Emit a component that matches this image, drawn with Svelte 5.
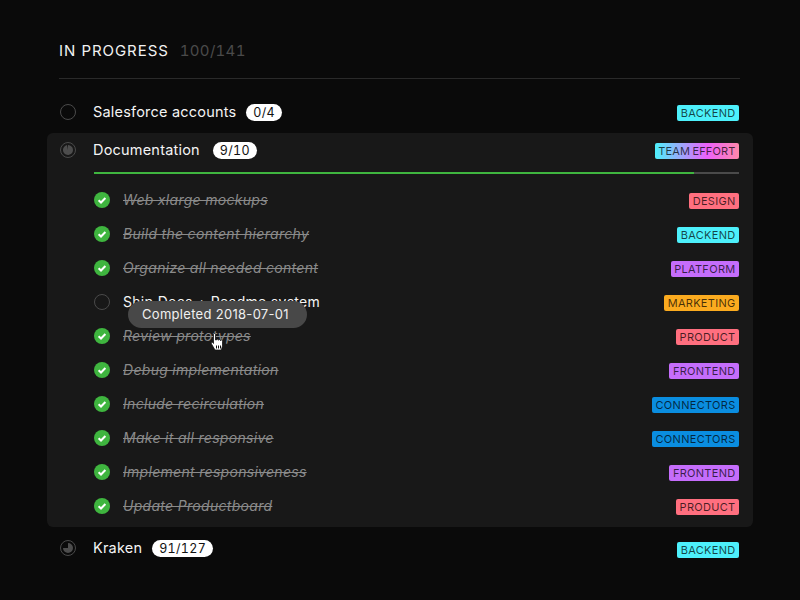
<script>
  const tones = {
    BACKEND: "cyan",
    DESIGN: "red",
    PLATFORM: "violet",
    MARKETING: "orange",
    PRODUCT: "red",
    FRONTEND: "violet",
    CONNECTORS: "blue",
    "TEAM EFFORT": "mix"
  };

  const tasks = [
    { name: "Web xlarge mockups", tag: "DESIGN", done: true },
    { name: "Build the content hierarchy", tag: "BACKEND", done: true },
    { name: "Organize all needed content", tag: "PLATFORM", done: true },
    { name: "Ship Docs + Readme system", tag: "MARKETING", done: false, tip: "Completed 2018-07-01" },
    { name: "Review prototypes", tag: "PRODUCT", done: true },
    { name: "Debug implementation", tag: "FRONTEND", done: true },
    { name: "Include recirculation", tag: "CONNECTORS", done: true },
    { name: "Make it all responsive", tag: "CONNECTORS", done: true },
    { name: "Implement responsiveness", tag: "FRONTEND", done: true },
    { name: "Update Productboard", tag: "PRODUCT", done: true }
  ];
</script>

{#snippet pie(d)}
  <svg class="status" width="16" height="16" viewBox="0 0 16 16">
    <circle cx="8" cy="8" r="7.5" fill="none" stroke="#4a4a4a" />
    <path {d} fill="#4d4d4d" />
  </svg>
{/snippet}

{#snippet tag(label)}
  <span class="tag {tones[label]}">{label}</span>
{/snippet}

<main class="page">
  <header class="head">
    <h1>IN PROGRESS</h1>
    <span class="total">100/141</span>
  </header>

  <div class="row project">
    <span class="ring"></span>
    <span class="name">Salesforce accounts</span>
    <span class="count">0/4</span>
    {@render tag("BACKEND")}
  </div>

  <section class="panel">
    <div class="row open">
      {@render pie("M8 3 A5 5 0 1 1 7 3.1 L8 8 Z")}
      <span class="name">Documentation</span>
      <span class="count">9/10</span>
      {@render tag("TEAM EFFORT")}
    </div>
    <div class="bar"><div class="fill" style="width: {(600 / 645) * 100}%"></div></div>
    <ul class="tasks">
      {#each tasks as task}
        <li class="task">
          {#if task.done}
            <svg class="status" width="16" height="16" viewBox="0 0 16 16">
              <circle cx="8" cy="8" r="8" fill="#3fb53f" />
              <path d="M4.6 8.2 L7 10.5 L11.4 6" fill="none" stroke="#fff" stroke-width="2" />
            </svg>
          {:else}
            <span class="ring"></span>
          {/if}
          <span class="label" class:done={task.done}>{task.name}</span>
          {#if task.tip}
            <span class="tip">{task.tip}</span>
            <svg class="hand" width="14" height="19" viewBox="0 0 14 19">
              <path d="M3.500 1.500 a1 1 0 0 1 2 0 V7 h1 a1 1 0 0 1 2 .3 a1 1 0 0 1 2 .4 a1 1 0 0 1 2 .6 V13 l-1.200 4 H5 L1.500 11 c-.8-1.300 .6-2.200 1.500-1.300 L3.500 10.500 Z" fill="#fff" stroke="#111" stroke-width=".8" />
              <path d="M6.500 12.500v3M8.500 12.500v3M10.500 12.500v3" stroke="#111" stroke-width="1" />
            </svg>
          {/if}
          {@render tag(task.tag)}
        </li>
      {/each}
    </ul>
  </section>

  <div class="row project last">
    {@render pie("M8 3 A5 5 0 1 1 3 8 L8 8 Z")}
    <span class="name">Kraken</span>
    <span class="count">91/127</span>
    {@render tag("BACKEND")}
  </div>
</main>

<style>
  :global(body) {
    background: #0a0a0a;
  }

  .page {
    width: 706px;
    height: 600px;
    box-sizing: border-box;
    margin-left: 47px;
    padding-top: 40px;
    font-family: Inter, "Liberation Sans", sans-serif;
    color: #fff;
  }

  .head {
    display: flex;
    align-items: center;
    gap: 11px;
    height: 20px;
    margin: 0 13px 0 12px;
    padding-bottom: 18px;
    border-bottom: 1px solid #2a2a2a;
  }

  h1 {
    margin: 0;
    font-size: 15px;
    font-weight: 400;
    letter-spacing: 0.95px;
    color: #f2f2f2;
  }

  .total {
    font-size: 15px;
    font-variant-numeric: tabular-nums;
    letter-spacing: 0.3px;
    color: #4a4a4a;
  }

  .row {
    display: flex;
    align-items: center;
    height: 34px;
    padding: 0 14px 0 13px;
  }

  .project {
    margin-top: 16px;
    height: 34px;
  }

  .project.last {
    margin-top: 4px;
  }

  .project.last .tag {
    margin-top: 4px;
  }

  .panel {
    margin-top: 4px;
    height: 394px;
    box-sizing: border-box;
    border-radius: 6px;
    background: #181818;
  }

  .open {
    height: 34px;
  }

  .open .count {
    margin-left: 13px;
  }

  .status {
    flex: none;
    display: block;
  }

  .ring {
    flex: none;
    box-sizing: border-box;
    width: 16px;
    height: 16px;
    border: 1px solid #4a4a4a;
    border-radius: 50%;
  }

  .name {
    margin-left: 17px;
    margin-bottom: 2px;
    font-size: 14.500px;
    letter-spacing: 0.2px;
    color: #f4f4f4;
  }

  .count {
    margin-left: 10px;
    padding: 0 7px;
    height: 17px;
    line-height: 17px;
    border-radius: 9px;
    background: #fff;
    color: #111;
    font-size: 12.500px;
    font-variant-numeric: tabular-nums;
    letter-spacing: 0.3px;
  }

  .tag {
    flex: none;
    margin-left: auto;
    margin-top: 2px;
    height: 16px;
    line-height: 16px;
    padding: 0 3.500px;
    border-radius: 2px;
    font-size: 11px;
    letter-spacing: 0.3px;
    color: rgba(0, 0, 0, 0.72);
  }

  .cyan { background: #4df0fb; }
  .red { background: #ff6f7f; }
  .violet { background: #c56dfb; }
  .orange { background: #fbab1f; }
  .blue { background: #0a8de0; }

  .mix {
    background: linear-gradient(90deg, #4df0fb 0%, #ec60fb 62%, #ff88aa 100%);
    letter-spacing: 0.15px;
    word-spacing: -1px;
  }

  .bar {
    height: 2px;
    margin: 5px 14px 0 47px;
    background: #4a4a4a;
  }

  .fill {
    height: 100%;
    background: #3fb53f;
  }

  .tasks {
    list-style: none;
    margin: 9px 0 0;
    padding: 0;
  }

  .task {
    position: relative;
    display: flex;
    align-items: center;
    height: 34px;
    padding: 0 14px 0 47px;
  }

  .label {
    margin-left: 13px;
    margin-bottom: 2px;
    font-size: 14px;
    letter-spacing: 0.3px;
    color: #f4f4f4;
  }

  .label.done {
    font-style: italic;
    color: #8a8a8a;
    text-decoration: line-through;
  }

  .tip {
    position: absolute;
    left: 81px;
    top: 16px;
    z-index: 2;
    height: 27px;
    line-height: 27px;
    padding: 0 18px 0 14px;
    border-radius: 14px;
    background: #484848;
    color: #f0f0f0;
    font-size: 13px;
    letter-spacing: 0.3px;
    white-space: nowrap;
  }

  .hand {
    position: absolute;
    left: 163px;
    top: 48px;
    z-index: 3;
  }
</style>
